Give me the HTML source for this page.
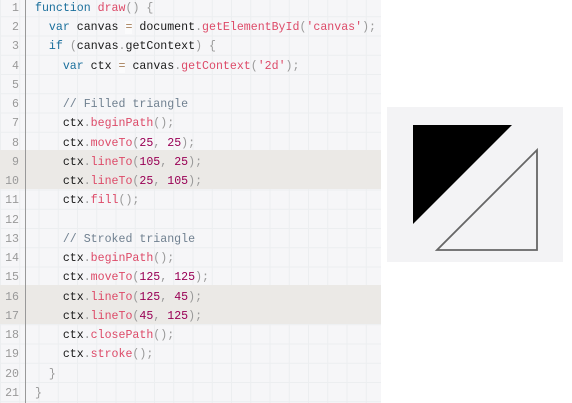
<!DOCTYPE html><html><head><style>
body{margin:0;width:572px;height:403px;background:#fff;position:relative;overflow:hidden;font-family:"Liberation Mono",monospace;}
#code{position:absolute;left:0;top:0;width:381px;height:403px;background-color:#f6f6f8;
background-image:linear-gradient(#eceef0 1px,transparent 1px),linear-gradient(90deg,#eceef0 1px,transparent 1px);background-size:19.25px 19.25px;background-position:0 -3px;}
.gut{position:absolute;left:25px;top:0;width:1px;height:403px;background:#999;}
.l{position:absolute;left:0;width:381px;height:19.25px;line-height:19.25px;font-size:11.6px;color:#1a1a1a;white-space:pre;}
.l.h{background:#ebe9e6;}
.n{position:absolute;left:0;top:2.5px;width:19px;text-align:right;color:#999;}
.c{position:absolute;left:35px;top:2.5px;}
.k{color:#1a6f9c}.f{color:#dd4a68}.p{color:#999}.m{color:#990055}.s{color:#dd4a68}.cm{color:#708090}.o{color:#a67f59;background:rgba(255,255,255,.5)}
</style></head><body>
<div id="code">
<div class="l" style="top:-3.6px"><span class="n">1</span><span class="c"><span class="k">function</span> <span class="f">draw</span><span class="p">()</span> <span class="p">{</span></span></div>
<div class="l" style="top:15.6px"><span class="n">2</span><span class="c">  <span class="k">var</span> canvas <span class="o">=</span> document<span class="p">.</span><span class="f">getElementById</span><span class="p">(</span><span class="s">'canvas'</span><span class="p">);</span></span></div>
<div class="l" style="top:34.9px"><span class="n">3</span><span class="c">  <span class="k">if</span> <span class="p">(</span>canvas<span class="p">.</span>getContext<span class="p">)</span> <span class="p">{</span></span></div>
<div class="l" style="top:54.1px"><span class="n">4</span><span class="c">    <span class="k">var</span> ctx <span class="o">=</span> canvas<span class="p">.</span><span class="f">getContext</span><span class="p">(</span><span class="s">'2d'</span><span class="p">);</span></span></div>
<div class="l" style="top:73.4px"><span class="n">5</span></div>
<div class="l" style="top:92.6px"><span class="n">6</span><span class="c">    <span class="cm">// Filled triangle</span></span></div>
<div class="l" style="top:111.9px"><span class="n">7</span><span class="c">    ctx<span class="p">.</span><span class="f">beginPath</span><span class="p">();</span></span></div>
<div class="l" style="top:131.1px"><span class="n">8</span><span class="c">    ctx<span class="p">.</span><span class="f">moveTo</span><span class="p">(</span><span class="m">25</span><span class="p">,</span> <span class="m">25</span><span class="p">);</span></span></div>
<div class="l h" style="top:150.4px"><span class="n">9</span><span class="c">    ctx<span class="p">.</span><span class="f">lineTo</span><span class="p">(</span><span class="m">105</span><span class="p">,</span> <span class="m">25</span><span class="p">);</span></span></div>
<div class="l h" style="top:169.6px"><span class="n">10</span><span class="c">    ctx<span class="p">.</span><span class="f">lineTo</span><span class="p">(</span><span class="m">25</span><span class="p">,</span> <span class="m">105</span><span class="p">);</span></span></div>
<div class="l" style="top:188.9px"><span class="n">11</span><span class="c">    ctx<span class="p">.</span><span class="f">fill</span><span class="p">();</span></span></div>
<div class="l" style="top:208.1px"><span class="n">12</span></div>
<div class="l" style="top:227.4px"><span class="n">13</span><span class="c">    <span class="cm">// Stroked triangle</span></span></div>
<div class="l" style="top:246.6px"><span class="n">14</span><span class="c">    ctx<span class="p">.</span><span class="f">beginPath</span><span class="p">();</span></span></div>
<div class="l" style="top:265.9px"><span class="n">15</span><span class="c">    ctx<span class="p">.</span><span class="f">moveTo</span><span class="p">(</span><span class="m">125</span><span class="p">,</span> <span class="m">125</span><span class="p">);</span></span></div>
<div class="l h" style="top:285.1px"><span class="n">16</span><span class="c">    ctx<span class="p">.</span><span class="f">lineTo</span><span class="p">(</span><span class="m">125</span><span class="p">,</span> <span class="m">45</span><span class="p">);</span></span></div>
<div class="l h" style="top:304.4px"><span class="n">17</span><span class="c">    ctx<span class="p">.</span><span class="f">lineTo</span><span class="p">(</span><span class="m">45</span><span class="p">,</span> <span class="m">125</span><span class="p">);</span></span></div>
<div class="l" style="top:323.6px"><span class="n">18</span><span class="c">    ctx<span class="p">.</span><span class="f">closePath</span><span class="p">();</span></span></div>
<div class="l" style="top:342.9px"><span class="n">19</span><span class="c">    ctx<span class="p">.</span><span class="f">stroke</span><span class="p">();</span></span></div>
<div class="l" style="top:362.1px"><span class="n">20</span><span class="c">  <span class="p">}</span></span></div>
<div class="l" style="top:381.4px"><span class="n">21</span><span class="c"><span class="p">}</span></span></div>
<div class="gut"></div>
</div>
<svg style="position:absolute;left:0;top:0" width="572" height="403">
<rect x="387" y="107" width="176" height="155" fill="#f3f3f5"/>
<polygon points="413,125 512,125 413,224" fill="#000"/>
<polygon points="537,150 537,250 437,250" fill="none" stroke="#666" stroke-width="1.8"/>
</svg>
</body></html>
